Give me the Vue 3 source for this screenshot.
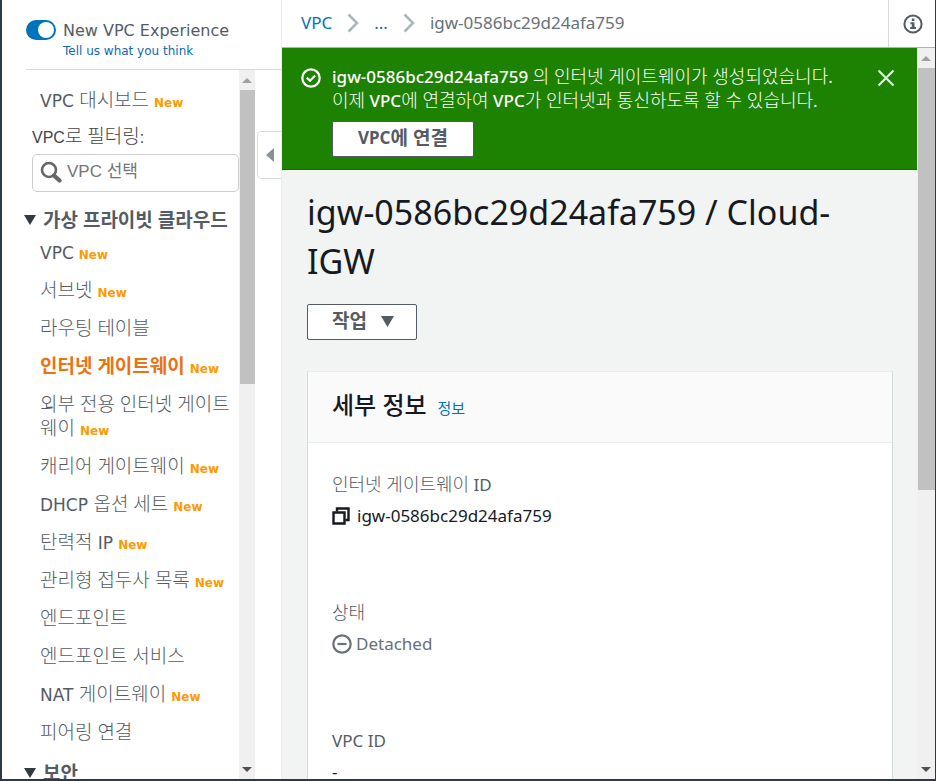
<script setup>
import { ref } from 'vue'

const newExperience = ref(true)
const filter = ref('')

// Splits mixed labels so Hangul and Latin runs can use their own sizes.
const runs = (text) =>
  text
    .split(/([\u3131-\uD79D]+(?: [\u3131-\uD79D]+)*)/)
    .filter(Boolean)
    .map((t) => ({ t, ko: /[\u3131-\uD79D]/.test(t) }))

const links = [
  { label: 'VPC', isNew: true },
  { label: '서브넷', isNew: true },
  { label: '라우팅 테이블' },
  { label: '인터넷 게이트웨이', isNew: true, active: true },
  { label: '외부 전용 인터넷 게이트웨이', isNew: true },
  { label: '캐리어 게이트웨이', isNew: true },
  { label: 'DHCP 옵션 세트', isNew: true },
  { label: '탄력적 IP', isNew: true },
  { label: '관리형 접두사 목록', isNew: true },
  { label: '엔드포인트' },
  { label: '엔드포인트 서비스' },
  { label: 'NAT 게이트웨이', isNew: true },
  { label: '피어링 연결' },
]
</script>

<template>
  <div class="window">
    <aside class="sidebar">
      <header class="side-head">
        <input id="experience" v-model="newExperience" class="toggle" type="checkbox" />
        <div class="side-head-text">
          <label for="experience">New VPC Experience</label>
          <a href="#">Tell us what you think</a>
        </div>
      </header>
      <div class="side-body">
        <nav class="nav">
          <a class="item" href="#"><span v-for="r in runs('VPC 대시보드')" :key="r.t" :class="{ ko: r.ko }">{{ r.t }}</span><b class="new">New</b></a>
          <label class="filter-label" for="vpc-filter">VPC<span class="ko">로 필터링</span>:</label>
          <div class="search">
            <svg viewBox="0 0 22 22" aria-hidden="true">
              <circle cx="9" cy="9" r="7" fill="none" stroke="#666" stroke-width="2.6" />
              <path d="M14 14.500L19.500 19.500" stroke="#666" stroke-width="4.200" stroke-linecap="round" />
            </svg>
            <input id="vpc-filter" v-model="filter" type="text" placeholder="VPC 선택" />
          </div>
          <h2 class="group">
            <svg viewBox="0 0 12 10" aria-hidden="true"><path d="M0 0H12L6 10Z" /></svg>
            <span>가상 프라이빗 클라우드</span>
          </h2>
          <ul class="links">
            <li v-for="l in links" :key="l.label">
              <a class="item" :class="{ active: l.active }" href="#"><span v-for="r in runs(l.label)" :key="r.t" :class="{ ko: r.ko }">{{ r.t }}</span><b v-if="l.isNew" class="new">New</b></a>
            </li>
          </ul>
          <h2 class="group">
            <svg viewBox="0 0 12 10" aria-hidden="true"><path d="M0 0H12L6 10Z" /></svg>
            <span>보안</span>
          </h2>
        </nav>
        <div class="scrollbar" aria-hidden="true">
          <i class="up"></i>
          <div class="track"><div class="thumb side-thumb"></div></div>
          <i class="down"></i>
        </div>
        <div class="gutter">
          <button class="collapse" type="button" aria-label="Collapse">
            <svg viewBox="0 0 8 14"><path d="M8 0V14L0 7Z" fill="#879196" /></svg>
          </button>
        </div>
      </div>
    </aside>

    <div class="main">
      <header class="top">
        <nav class="crumbs">
          <a href="#">VPC</a>
          <svg viewBox="0 0 12 20" aria-hidden="true"><path d="M1.500 1.500L10 10L1.500 18.500" /></svg>
          <a href="#">...</a>
          <svg viewBox="0 0 12 20" aria-hidden="true"><path d="M1.500 1.500L10 10L1.500 18.500" /></svg>
          <span>igw-0586bc29d24afa759</span>
        </nav>
        <button class="info" type="button" aria-label="Info">
          <svg viewBox="0 0 20 20">
            <circle cx="10" cy="10" r="8.600" fill="none" stroke="#545b64" stroke-width="2" />
            <path d="M8.800 4.500H11.400V7H8.800ZM7.500 8.300H11.500V13H13V15H7.200V13H8.800V10.200H7.500Z" fill="#545b64" />
          </svg>
        </button>
      </header>

      <div class="scroll">
        <div class="page">
          <section class="flash">
            <svg class="ok" viewBox="0 0 20 20" aria-hidden="true">
              <circle cx="10" cy="10" r="8.700" />
              <path d="M5.800 9.800L9 12.800L14.200 7.500" />
            </svg>
            <div class="flash-body">
              <p><strong>igw-0586bc29d24afa759</strong> <span class="ko">의 인터넷 게이트웨이가 생성되었습니다</span>.</p>
              <p><span class="ko">이제</span> <em>VPC</em><span class="ko">에 연결하여</span> <em>VPC</em><span class="ko">가 인터넷과 통신하도록 할 수 있습니다</span>.</p>
              <button class="btn attach" type="button">VPC<span class="ko">에 연결</span></button>
            </div>
            <button class="close" type="button" aria-label="Close">
              <svg viewBox="0 0 18 18"><path d="M1.500 1.500L16.500 16.500M16.500 1.500L1.500 16.500" /></svg>
            </button>
          </section>

          <main class="content">
            <h1>igw-0586bc29d24afa759 / Cloud-IGW</h1>
            <button class="btn actions" type="button">
              <span class="ko">작업</span>
              <svg viewBox="0 0 13 11" aria-hidden="true"><path d="M0 0H13L6.500 11Z" fill="#545b64" /></svg>
            </button>
            <section class="card">
              <header class="card-head">
                <h2>세부 정보</h2>
                <a href="#">정보</a>
              </header>
              <dl>
                <div>
                  <dt><span class="ko">인터넷 게이트웨이</span> ID</dt>
                  <dd>
                    <svg class="copy" viewBox="0 0 18 18" aria-hidden="true">
                      <path d="M5 4.500V1.500H16.500V13H13.500" /><path d="M1.500 5.500H12.500V16.500H1.500Z" />
                    </svg>
                    igw-0586bc29d24afa759
                  </dd>
                </div>
                <div>
                  <dt><span class="ko">상태</span></dt>
                  <dd class="muted">
                    <svg class="minus" viewBox="0 0 20 20" aria-hidden="true">
                      <circle cx="10" cy="10" r="8.700" /><path d="M5.500 10H14.500" />
                    </svg>
                    Detached
                  </dd>
                </div>
                <div>
                  <dt>VPC ID</dt>
                  <dd>-</dd>
                </div>
              </dl>
            </section>
          </main>
        </div>
        <div class="scrollbar wide" aria-hidden="true">
          <i class="up"></i>
          <div class="track"><div class="thumb main-thumb"></div></div>
          <i class="down"></i>
        </div>
      </div>
    </div>
  </div>
</template>

<style>
body {
  background: #fff;
}
</style>

<style scoped>
* {
  box-sizing: border-box;
  margin: 0;
  padding: 0;
}
button,
input {
  font: inherit;
  border: 0;
  background: none;
}
a {
  color: #0073bb;
  text-decoration: none;
}
svg {
  display: block;
  flex: none;
}
.window {
  display: grid;
  grid-template-columns: 279px 1fr;
  height: 100vh;
  overflow: hidden;
  border: solid #2c3a48;
  border-width: 0 1px 2px 2px;
  background: #fff;
  font-family: "Noto Sans", "Noto Sans CJK KR", sans-serif;
  color: #16191f;
}
.ko {
  font-family: "Noto Sans", "Noto Sans CJK KR", sans-serif;
  font-size: 19px;
  font-weight: 300;
  line-height: 1;
}

/* Sidebar */
.sidebar {
  display: flex;
  flex-direction: column;
  min-height: 0;
  font-family: "DejaVu Sans", "Noto Sans CJK KR", sans-serif;
  font-size: 16px;
  color: #545b64;
}
.side-head {
  display: flex;
  gap: 7px;
  height: 70px;
  margin-left: 24px;
  padding-top: 20px;
  border-bottom: 1px solid #d5dbdb;
}
.side-head-text {
  display: flex;
  flex-direction: column;
}
.side-head-text label {
  line-height: 22px;
}
.side-head-text a {
  font-size: 12px;
  line-height: 18px;
  color: #1166bb;
}
.toggle {
  appearance: none;
  display: flex;
  width: 30px;
  height: 20px;
  padding: 2px;
  border-radius: 10px;
  background: #879196;
}
.toggle::before {
  content: "";
  width: 16px;
  height: 16px;
  border-radius: 50%;
  background: #fff;
}
.toggle:checked {
  justify-content: flex-end;
  background: #0073bb;
}
.side-body {
  flex: 1;
  display: flex;
  min-height: 0;
}
.nav {
  flex: 1;
  min-width: 0;
  overflow: hidden;
  padding-top: 19px;
}
.item {
  display: block;
  margin-left: 38px;
  font-size: 17px;
  line-height: 24px;
  color: #545b64;
  word-break: break-all;
}
.item.active,
.item.active .ko {
  font-weight: 700;
  color: #ec7211;
}
.new {
  margin-left: 5px;
  font-size: 12px;
  line-height: 1;
  color: #ff9900;
}
.filter-label {
  display: block;
  margin: 13px 0 4px 30px;
  font-family: "Liberation Sans", "Noto Sans CJK KR", sans-serif;
  line-height: 24px;
  color: #444;
}
.search {
  display: flex;
  align-items: center;
  gap: 5px;
  height: 38px;
  margin-left: 30px;
  padding: 0 7px 2px;
  border: 1px solid #ccc;
  border-radius: 5px;
}
.search svg {
  width: 22px;
  height: 22px;
}
.search input {
  flex: 1;
  min-width: 0;
  outline: 0;
  font-family: "Liberation Sans", "Noto Sans CJK KR", sans-serif;
  font-size: 17px;
}
.search input::placeholder {
  color: #757575;
}
.group {
  display: flex;
  align-items: center;
  gap: 7px;
  margin: 16px 0 9px 22px;
  font-family: "Noto Sans", "Noto Sans CJK KR", sans-serif;
  font-size: 19px;
  font-weight: 700;
  line-height: 24px;
  white-space: nowrap;
}
.group svg {
  width: 12px;
  height: 10px;
  fill: #333a42;
}
.links {
  display: flex;
  flex-direction: column;
  gap: 14px;
  list-style: none;
}
.gutter {
  width: 26px;
  padding: 61px 0 0 2px;
}
.collapse {
  display: flex;
  align-items: center;
  justify-content: center;
  width: 100%;
  height: 48px;
  border: 1px solid #d5dbdb;
  border-right: 0;
  border-radius: 5px 0 0 5px;
}
.collapse svg {
  width: 8px;
  height: 14px;
}

/* Scrollbars */
.scrollbar {
  display: flex;
  flex-direction: column;
  align-items: center;
  width: 16px;
  background: #f0f0f0;
}
.scrollbar.wide {
  width: 18px;
}
.scrollbar i {
  display: flex;
  align-items: center;
  justify-content: center;
  height: 20px;
}
.scrollbar i::before {
  content: "";
  border: 5px solid transparent;
}
.scrollbar .up::before {
  border-top: 0;
  border-bottom-color: #a0a0a0;
}
.scrollbar .down::before {
  border-bottom: 0;
  border-top-color: #505050;
}
.track {
  flex: 1;
  width: 100%;
  padding-left: 1px;
}
.thumb {
  background: #c1c1c1;
}
.side-thumb {
  height: 44%;
}
.main-thumb {
  height: 61%;
}

/* Main column */
.main {
  display: flex;
  flex-direction: column;
  min-width: 0;
  min-height: 0;
  border-left: 1px solid #eaeded;
  font-size: 17px;
}
.top {
  display: flex;
  height: 48px;
  border-bottom: 1px solid #aab7b8;
}
.crumbs {
  flex: 1;
  display: flex;
  align-items: center;
  gap: 15px;
  padding: 0 0 2px 19px;
  line-height: 24px;
  color: #687078;
}
.crumbs svg {
  width: 12px;
  height: 20px;
  fill: none;
  stroke: #aab7b8;
  stroke-width: 2.500;
}
.info {
  display: flex;
  align-items: center;
  justify-content: center;
  width: 47px;
  padding-left: 2px;
  border-left: 1px solid #d5dbdb;
}
.info svg {
  width: 20px;
  height: 20px;
}
.scroll {
  flex: 1;
  display: flex;
  min-height: 0;
}
.page {
  flex: 1;
  min-width: 0;
  overflow: hidden;
  background: #f2f3f3;
}
.flash {
  display: flex;
  align-items: flex-start;
  height: 122px;
  padding: 17px 22px 0 19px;
  border-bottom: 1px solid #17690a;
  background: #1d8102;
  color: #fff;
}
.ok {
  width: 20px;
  height: 20px;
  margin: 3px 11px 0 0;
  fill: none;
  stroke: #fff;
  stroke-width: 2.200;
}
.flash-body {
  flex: 1;
  line-height: 24px;
}
.flash-body p .ko {
  font-size: 18px;
}
.flash-body strong,
.flash-body em {
  font-style: normal;
  font-weight: 500;
}
.btn {
  display: flex;
  align-items: center;
  justify-content: center;
  height: 36px;
  border: 1px solid #545b64;
  border-radius: 2px;
  background: #fff;
  font-weight: 700;
  line-height: 24px;
  color: #545b64;
}
.btn .ko {
  font-weight: 700;
}
.attach {
  margin-top: 8px;
  padding: 0 25px 2px;
}
.close {
  padding: 4px 0;
}
.close svg {
  width: 18px;
  height: 18px;
  fill: none;
  stroke: #dff0dc;
  stroke-width: 2.200;
}
.content {
  padding: 18px 24px 0 25px;
}
h1 {
  font-size: 34px;
  font-weight: 400;
  line-height: 49px;
}
.actions {
  gap: 14px;
  margin: 18px 0 31px;
  padding: 0 22px 2px 24px;
}
.actions svg {
  width: 13px;
  height: 11px;
}
.card {
  min-height: 500px;
  border: 1px solid #d5dbdb;
  border-top-color: #eaeded;
  background: #fff;
}
.card-head {
  display: flex;
  align-items: baseline;
  gap: 11px;
  height: 71px;
  padding: 15px 24px 0;
  border-bottom: 1px solid #eaeded;
  background: #fafafa;
}
.card-head h2 {
  font-size: 24px;
  font-weight: 500;
  line-height: 36px;
}
.card-head a {
  font-size: 15px;
}
dl {
  display: flex;
  flex-direction: column;
  gap: 73px;
  padding: 30px 24px 0;
}
dt {
  line-height: 24px;
  color: #545b64;
}
dt .ko {
  font-size: 18px;
}
dd {
  display: flex;
  align-items: center;
  gap: 7px;
  margin-top: 7px;
  line-height: 24px;
}
dd.muted {
  gap: 4px;
  color: #687078;
}
.copy {
  width: 18px;
  height: 18px;
  fill: none;
  stroke: #16191f;
  stroke-width: 2.400;
}
.minus {
  width: 20px;
  height: 20px;
  fill: none;
  stroke: #687078;
  stroke-width: 2.200;
}
</style>
